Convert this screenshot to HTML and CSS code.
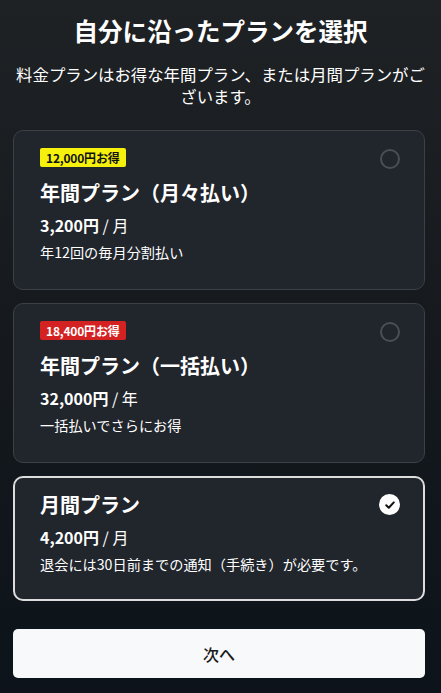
FILE: index.html
```html
<!DOCTYPE html>
<html lang="ja">
<head>
<meta charset="utf-8">
<title>プラン選択</title>
<link rel="stylesheet" href="styles.css">
</head>
<body>
<main class="page">
  <header class="head">
    <h1 class="title">自分に沿ったプランを選択</h1>
    <p class="lead">料金プランはお得な年間プラン、または月間プランがございます。</p>
  </header>

  <div class="plans">
    <label class="plan">
      <div class="plan-body">
        <span class="badge badge-yellow">12,000円お得</span>
        <h2 class="plan-name">年間プラン（月々払い）</h2>
        <p class="price"><b>3,200円</b> / 月</p>
        <p class="desc">年12回の毎月分割払い</p>
      </div>
      <span class="radio"></span>
    </label>

    <label class="plan">
      <div class="plan-body">
        <span class="badge badge-red">18,400円お得</span>
        <h2 class="plan-name">年間プラン（一括払い）</h2>
        <p class="price"><b>32,000円</b> / 年</p>
        <p class="desc">一括払いでさらにお得</p>
      </div>
      <span class="radio"></span>
    </label>

    <label class="plan plan-selected">
      <div class="plan-body">
        <h2 class="plan-name">月間プラン</h2>
        <p class="price"><b>4,200円</b> / 月</p>
        <p class="desc">退会には30日前までの通知（手続き）が必要です。</p>
      </div>
      <span class="radio radio-on">
        <svg viewBox="0 0 20 20" width="20" height="20"><path d="M6.2 10.3 L8.8 12.8 L13.8 7.4" fill="none" stroke="#111" stroke-width="2" stroke-linecap="round" stroke-linejoin="round"/></svg>
      </span>
    </label>
  </div>

  <button class="next" type="button">次へ</button>
</main>
</body>
</html>
```
FILE: styles.css
```css
* { box-sizing: border-box; }
html, body { margin: 0; padding: 0; }
body {
  min-height: 693px;
  background: linear-gradient(180deg, #1f2225 0%, #161a1e 45%, #0c131a 100%);
  color: #ffffff;
  font-family: "Noto Sans CJK JP", "Noto Sans", sans-serif;
}
.page {
  padding: 14px 16px 16px 13px;
  display: flex;
  flex-direction: column;
}
.head { text-align: center; margin-right: -3px; }
.title {
  margin: 0;
  font-size: 24.5px;
  line-height: 34px;
  font-weight: 700;
}
.lead {
  margin: 15px 0 0;
  font-size: 16.4px;
  line-height: 22px;
  font-weight: 400;
}
.plans {
  margin-top: 23px;
  display: flex;
  flex-direction: column;
  gap: 13px;
}
.plan {
  display: flex;
  align-items: flex-start;
  justify-content: space-between;
  background: #21252c;
  border: 1px solid #3c4147;
  border-radius: 10px;
  padding: 17px 24px 28px 26px;
}
.plan-selected {
  border: 2px solid #dcdcdc;
  padding: 16px 23px 26px 25px;
}
.plan-body { display: flex; flex-direction: column; align-items: flex-start; }
.badge {
  display: inline-block;
  height: 19px;
  line-height: 19px;
  padding: 0 6px;
  border-radius: 2px;
  font-size: 12px;
  font-weight: 700;
  margin-bottom: 15px;
  letter-spacing: -0.2px;
}
.badge-yellow { background: #f6f10c; color: #111111; }
.badge-red { background: #d42222; color: #ffffff; }
.plan-name {
  margin: 0;
  font-size: 20px;
  line-height: 21px;
  font-weight: 700;
}
.price {
  margin: 10px 0 0;
  font-size: 16px;
  line-height: 24px;
  font-weight: 400;
}
.price b { font-weight: 700; }
.desc {
  margin: 6px 0 0;
  font-size: 14.2px;
  line-height: 18px;
}
.radio {
  flex: none;
  width: 20px;
  height: 20px;
  margin-top: 1px;
  border: 2px solid #4a4f56;
  border-radius: 50%;
  display: flex;
  align-items: center;
  justify-content: center;
}
.radio-on {
  background: #ffffff;
  border-color: #ffffff;
  margin-top: 0;
  width: 21px;
  height: 21px;
}
.radio-on svg { flex: none; }
.next {
  margin-top: 28px;
  height: 49px;
  width: 100%;
  background: #f8f9fa;
  color: #1a1a1a;
  border: 0;
  border-radius: 5px;
  font-family: "Noto Sans CJK JP", "Noto Sans", sans-serif;
  font-size: 16px;
  font-weight: 500;
}
```
